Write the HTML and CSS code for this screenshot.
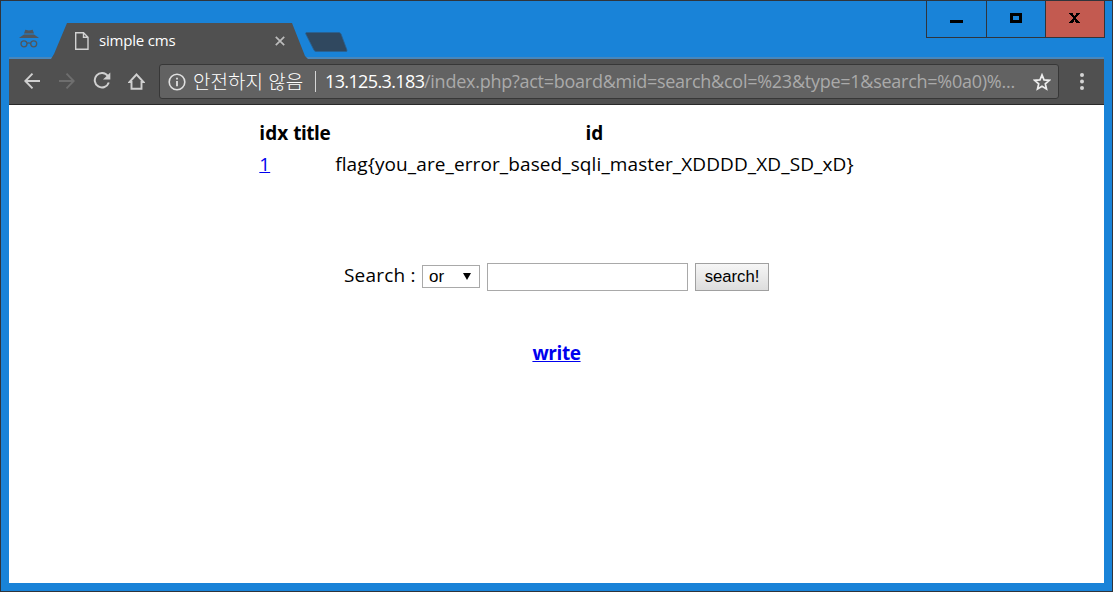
FILE: index.html
```html
<!DOCTYPE html>
<html lang="ko">
<head>
<meta charset="utf-8">
<title>simple cms</title>
<link rel="stylesheet" href="styles.css">
</head>
<body>
<div class="window">
  <header class="titlebar">
    <svg class="incognito" width="20" height="20" viewBox="0 0 20 20">
      <path d="M5 4.500 6.300.8 10 1.500 13.700.8 15 4.500z" fill="#50565c"/>
      <path d="M0 9 3.500 6.500 5 5.600H15L16.500 6.500 20 9z" fill="#50565c"/>
      <g fill="none" stroke="#50565c" stroke-width="1.300"><circle cx="5" cy="14.800" r="3"/><circle cx="14.700" cy="14.800" r="3"/><path d="M8 14.500q1.800-1.400 3.700 0"/></g>
    </svg>
    <div class="tab">
      <svg class="page-icon" width="14" height="18" viewBox="0 0 14 18" fill="none" stroke="#d2d2d2" stroke-width="1.400"><path d="M.7.700H8.500L13 5.200V17.300H.7zM8.500.700V5.200H13"/></svg>
      <span class="tab-title">simple cms</span>
      <svg class="tab-close" width="10" height="10" viewBox="0 0 10 10" stroke="#bcbcbc" stroke-width="1.700"><path d="M.8.800 9.200 9.200M9.200.800.8 9.200"/></svg>
    </div>
    <svg class="new-tab" width="43" height="20" viewBox="0 0 42 20" preserveAspectRatio="none"><path d="M1.500.500H33q1.500 0 2.200 1.500L41 18q.4 1.500-1 1.500H11q-1.500 0-2.300-1.500L.8 2Q.3.500 1.500.500z" fill="#30485f" stroke="#2a618f" stroke-width=".8"/></svg>
    <div class="controls">
      <div class="control"><svg width="59" height="36"><path d="M23 19h13v3h-13z"/></svg></div>
      <div class="control narrow"><svg width="58" height="36"><path d="M24.500 13.500h9v7h-9z" fill="none" stroke="#000" stroke-width="3"/></svg></div>
      <div class="control close"><svg width="58" height="36"><path d="M23 12h4v2h1v1h1v-1h1v-2h4v1h-1v1h-1v1h-1v1h-1v2h1v1h1v1h1v1h1v1h-4v-1h-1v-2h-1v2h-1v1h-4v-1h1v-1h1v-1h1v-1h1v-2h-1v-1h-1v-1h-1v-1h-1z"/></svg></div>
    </div>
  </header>
  <nav class="toolbar">
    <svg class="nav-icon" width="16" height="16" viewBox="0 0 16 16" fill="none" stroke="#d0d0d0" stroke-width="1.900"><path d="M16 8H1.500M8.500.700 1.300 8 8.500 15.300"/></svg>
    <svg class="nav-icon forward" width="16" height="16" viewBox="0 0 16 16" fill="none" stroke="#6e6e6e" stroke-width="1.900"><path d="M0 8H14.500M7.500.700 14.700 8 7.500 15.300"/></svg>
    <svg class="nav-icon reload" width="18" height="17" viewBox="0 0 18 17"><path d="M14.800 4A7.200 7.200 0 1 0 15.800 10.500" fill="none" stroke="#d0d0d0" stroke-width="2"/><path d="M17.300.500V7.500H10z" fill="#d0d0d0"/></svg>
    <svg class="nav-icon home" width="17" height="17" viewBox="0 0 17 17" fill="none" stroke="#d0d0d0" stroke-width="1.900"><path d="M8.500 1.500 1.500 9H3.500V15.800H13.500V9H15.500z"/></svg>
    <div class="address">
      <svg class="info" width="18" height="18" viewBox="0 0 18 18"><circle cx="9" cy="9" r="7.800" fill="none" stroke="#e0e0e0" stroke-width="1.600"/><path d="M8.100 4.700h1.800v1.900H8.100zM8.100 8h1.800v5.300H8.100z" fill="#e0e0e0"/></svg>
      <span class="security">안전하지 않음</span>
      <span class="divider"></span>
      <span class="host">13.125.3.183</span><span class="path">/index.php?act=board&amp;mid=search&amp;col=%23&amp;type=1&amp;search=%0a0)%...</span>
      <svg class="star" width="18" height="18" viewBox="0 0 18 18" fill="none" stroke="#eee" stroke-width="1.700"><path d="M9 1.900 11 6.900 16.300 7.300 12.300 10.800 13.500 16 9 13.200 4.500 16 5.700 10.800 1.700 7.300 7 6.900z"/></svg>
    </div>
    <svg class="menu" width="4" height="18" viewBox="0 0 4 18" fill="#d4d4d4"><circle cx="2" cy="2" r="2"/><circle cx="2" cy="8.500" r="2"/><circle cx="2" cy="15" r="2"/></svg>
  </nav>
  <main class="page">
    <table class="board">
      <tr class="head"><th><span class="h-idx">idx</span></th><th><span class="h-title">title</span></th><th>id</th></tr>
      <tr><td><a href="#">1</a></td><td></td><td><span class="flag">flag{you_are_error_based_sqli_master_XDDDD_XD_SD_xD}</span></td></tr>
    </table>
    <form class="search">
      <span class="label">Search :</span>
      <div class="select"><span>or</span><svg width="8" height="7"><path d="M0 0H8L4 7z"/></svg></div>
      <input class="query" type="text">
      <button class="submit" type="button">search!</button>
    </form>
    <a class="write" href="#">write</a>
  </main>
</div>
</body>
</html>
```
FILE: styles.css
```css
* { box-sizing: border-box; }
body { margin: 0; font-family: "Open Sans", "Noto Sans CJK KR", sans-serif; }
svg { display: block; flex: none; }
.window { width: 1113px; height: 592px; border: 1px solid #30343b; background: #1983d8; padding: 0 8px 8px; display: flex; flex-direction: column; }
.titlebar { height: 58px; display: flex; align-items: flex-start; border-bottom: 2px solid #4787bd; }
.incognito { margin: 28px 0 0 10px; }
.tab { width: 258px; height: 37px; margin: 22px 0 -3px 12px; background: #505050; display: flex; align-items: center; padding: 0 24px 0 24px; z-index: 1; clip-path: polygon(0 36px, 3px 31px, 16px 0, 241px 0, 254px 33px, 257px 36px, 257px 37px, 0 37px); }
.page-icon { margin-top: -1px; }
.tab-title { margin: -4px 0 0 10px; font-size: 15px; line-height: 20px; letter-spacing: -0.2px; color: #fff; flex: 1; white-space: nowrap; }
.tab-close { margin-top: -1px; }
.new-tab { margin: 31px 0 0 -4px; }
.controls { margin: -1px -1px 0 auto; display: flex; height: 38px; border: 1px solid #30343b; }
.control { width: 60px; border-right: 1px solid #30343b; }
.control.narrow { width: 59px; }
.control.close { width: 58px; background: #c35a50; border: 0; }
.toolbar { height: 46px; flex: none; background: #505050; border-bottom: 1px solid #292929; display: flex; align-items: center; padding: 0 20px 0 15px; }
.nav-icon { margin: -2px 19px 0 0; }
.nav-icon.forward { margin-right: 18px; }
.nav-icon.reload { margin-right: 17px; }
.nav-icon.home { margin: 0 14px 0 0; }
.address { width: 900px; height: 35px; border: 1px solid #373737; border-radius: 3px; background: #626262; display: flex; align-items: center; font-size: 18px; line-height: 26px; white-space: nowrap; color: #fff; padding: 0 7px 0 8px; }
.security { margin: -2px 0 0 7px; width: 113px; font-family: "Noto Sans CJK KR", sans-serif; font-size: 19px; font-weight: 300; }
.divider { width: 1px; height: 21px; margin: 0 9px; background: #d6d6d6; }
.host { width: 99px; letter-spacing: -0.62px; margin-top: -2px; }
.path { color: #aaa; flex: 1; letter-spacing: -0.26px; margin-top: -2px; }
.menu { margin-left: auto; }
.page { height: 478px; background: #fff; display: flex; flex-direction: column; align-items: center; font-size: 19px; color: #000; }
.board { margin-top: 11px; border-spacing: 3px; }
.board th, .board td { padding: 1px; height: 29px; line-height: 27px; }
.board .head th { height: 28px; line-height: 26px; }
.board td { text-align: left; }
.h-title { letter-spacing: -0.45px; }
.flag { letter-spacing: 0.1px; }
a { color: #0000ee; }
.search { display: flex; align-items: center; height: 30px; margin: 80px 0 0; }
.label { width: 78px; white-space: nowrap; margin-top: -4px; letter-spacing: 0.2px; }
.select { width: 58px; height: 23px; margin: -1px 7px 0 0; border: 1px solid #a9a9a9; display: flex; align-items: center; justify-content: space-between; padding: 0 8px 0 6px; font: 17px "Liberation Sans", sans-serif; }
.query { width: 201px; height: 28px; padding: 1px; border: 1px solid #a9a9a9; margin: 0 7px 0 0; }
.submit { width: 74px; height: 28px; padding: 0; border: 1px solid #a0a0a0; background: linear-gradient(#f6f6f6, #dddddd); font: 16.700px "Liberation Sans", sans-serif; color: #000; }
.write { margin-top: 48px; font-weight: bold; line-height: 27px; letter-spacing: -0.4px; }
```
